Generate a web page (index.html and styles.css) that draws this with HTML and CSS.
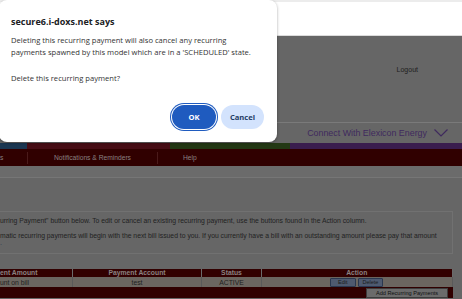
FILE: index.html
```html
<!DOCTYPE html>
<html>
<head>
<meta charset="utf-8">
<link rel="stylesheet" href="styles.css">
</head>
<body>
<div class="topbar"></div>
<div class="header">
  <div class="logout">Logout</div>
</div>
<div class="connect">
  <span class="connect-text">Connect With Elexicon Energy</span>
  <svg class="chev" width="14" height="8" viewBox="0 0 14 8"><path d="M0.5 0.5 L7 7 L13.5 0.5" fill="none" stroke="#3f2a5e" stroke-width="1.2"/></svg>
</div>
<div class="strip">
  <div class="s-blue"></div>
  <div class="s-red"></div>
  <div class="s-green"></div>
  <div class="s-purple"></div>
</div>
<nav class="nav">
  <div class="nav-item n1">s</div>
  <div class="nav-item n2">Notifications &amp; Reminders</div>
  <div class="nav-item n3">Help</div>
</nav>
<div class="subbar"></div>
<main class="content">
  <div class="infobox">
    <p class="line">urring Payment" button below. To edit or cancel an existing recurring payment, use the buttons found in the Action column.</p>
    <p class="line">matic recurring payments will begin with the next bill issued to you. If you currently have a bill with an outstanding amount please pay that amount</p>
    <p class="line dot">.</p>
  </div>
  <table class="tbl">
    <tr class="th">
      <td class="c1">ent Amount</td>
      <td class="c2">Payment Account</td>
      <td class="c3">Status</td>
      <td class="c4">Action</td>
    </tr>
    <tr class="tr">
      <td class="c1 left">unt on bill</td>
      <td class="c2">test</td>
      <td class="c3">ACTIVE</td>
      <td class="c4"><span class="sbtn">Edit</span><span class="sbtn">Delete</span></td>
    </tr>
    <tr class="tf">
      <td colspan="4"><span class="addbtn">Add Recurring Payments</span></td>
    </tr>
  </table>
</main>

<div class="dialog">
  <div class="d-title">secure6.i-doxs.net says</div>
  <div class="d-msg">Deleting this recurring payment will also cancel any recurring<br>payments spawned by this model which are in a 'SCHEDULED' state.</div>
  <div class="d-msg q">Delete this recurring payment?</div>
  <div class="d-btns">
    <span class="btn ok">OK</span>
    <span class="btn cancel">Cancel</span>
  </div>
</div>
</body>
</html>
```

FILE: styles.css
```css
html, body {
  margin: 0;
  padding: 0;
}
body {
  width: 462px;
  height: 299px;
  overflow: hidden;
  background: #666666;
  font-family: "Liberation Sans", Arial, sans-serif;
  position: relative;
}
.topbar {
  height: 33px;
  background: #ffffff;
  border-top: 2px solid #ececec;
  border-bottom: 1px solid #dcdcdc;
}
.header {
  height: 86px;
  background: #666666;
  border-bottom: 1px solid #7a7a7a;
  display: flex;
  justify-content: flex-end;
  align-items: flex-start;
}
.logout {
  margin: 30px 44px 0 0;
  font-size: 7px;
  color: #1e1e1e;
}
.connect {
  height: 20px;
  display: flex;
  align-items: center;
  justify-content: flex-end;
  padding-right: 14px;
  gap: 7px;
}
.connect-text {
  font-size: 8.9px;
  color: #3f2a5e;
}
.chev {
  display: block;
}
.strip {
  height: 6px;
  display: flex;
}
.s-blue { width: 27px; background: #1b3752; }
.s-red { width: 143px; background: #470d15; }
.s-green { width: 120px; background: #233814; }
.s-purple { flex: 1; background: #3a1d4e; }
.nav {
  height: 17px;
  background: #300000;
  display: flex;
  align-items: center;
  font-size: 6.7px;
  color: #8a8080;
}
.nav-item {
  height: 12px;
  display: flex;
  align-items: center;
}
.n1 { width: 27px; border-right: 1px solid #4a1a1a; }
.n2 { width: 129px; border-right: 1px solid #4a1a1a; justify-content: center; }
.n3 { padding-left: 25px; }
.subbar {
  height: 11px;
  background: #6b6b6b;
  border-bottom: 1px solid #767676;
}
.content {
  padding: 33px 0 0 0;
}
.infobox {
  margin-right: 9px;
  height: 43px;
  border: 1px solid #717171;
  border-left: none;
  padding-top: 5px;
  font-size: 6.8px;
  color: #222;
  box-sizing: border-box;
}
.line {
  margin: 0 0 7px 0;
  white-space: nowrap;
  line-height: 8px;
}
.line.dot {
  margin-top: -8px;
  color: #1f3550;
}
.tbl {
  margin-top: 15px;
  border-collapse: collapse;
  width: 453px;
  font-size: 6.8px;
}
.tbl td {
  padding: 0;
  text-align: center;
}
.th td {
  background: #320000;
  color: #8a8080;
  font-weight: bold;
  height: 8px;
  border-right: 1px solid #6b6b6b;
  line-height: 8px;
}
.tr td {
  background: #6b6660;
  color: #1e1e1e;
  height: 10px;
  border-right: 1px solid #5a5a5a;
}
.tf td {
  background: #300000;
  height: 11px;
  text-align: right;
  border-right: 2px solid #300000;
}
.c1 { width: 72px; text-align: left !important; }
.c2 { width: 128px; }
.c3 { width: 59px; }
.sbtn {
  display: inline-block;
  font-size: 5.5px;
  padding: 0 4px;
  margin: 0 1px;
  line-height: 7px;
  background: #4e5a70;
  border: 1px solid #2b3850;
  color: #1a1a1a;
  border-radius: 1px;
}
.sbtn:first-child { padding: 0 7px; }
.addbtn {
  display: inline-block;
  font-size: 5.6px;
  line-height: 8px;
  width: 80px;
  text-align: center;
  background: #6b6b6b;
  border: 1px solid #3c3c3c;
  color: #111;
  margin-right: 3px;
  vertical-align: middle;
}

/* Dialog overlay */
.dialog {
  position: absolute;
  left: -1px;
  top: 0;
  width: 278px;
  height: 142px;
  background: #ffffff;
  border-radius: 8px;
  box-shadow: 0 1px 3px rgba(0,0,0,0.35);
  font-family: "Open Sans", "Noto Sans", sans-serif;
  color: #202124;
  box-sizing: border-box;
  padding: 15px 12px 0 12px;
}
.d-title {
  font-size: 9px;
  font-weight: 700;
  line-height: 14px;
}
.d-msg {
  margin-top: 5px;
  font-size: 7.6px;
  line-height: 12px;
  color: #333;
}
.d-msg.q {
  margin-top: 14px;
}
.d-btns {
  display: flex;
  justify-content: flex-end;
  gap: 5px;
  margin-top: 21px;
  padding-right: 1px;
}
.btn {
  display: inline-flex;
  align-items: center;
  justify-content: center;
  height: 24px;
  border-radius: 12px;
  font-size: 7.6px;
  font-weight: 700;
  box-sizing: border-box;
}
.ok {
  width: 44px;
  background: #1f5bbf;
  color: #fff;
  box-shadow: 0 0 0 1px #fff, 0 0 0 2px #1f5bbf;
}
.cancel {
  width: 43px;
  background: #d3e3fd;
  color: #1f3d66;
}
```
